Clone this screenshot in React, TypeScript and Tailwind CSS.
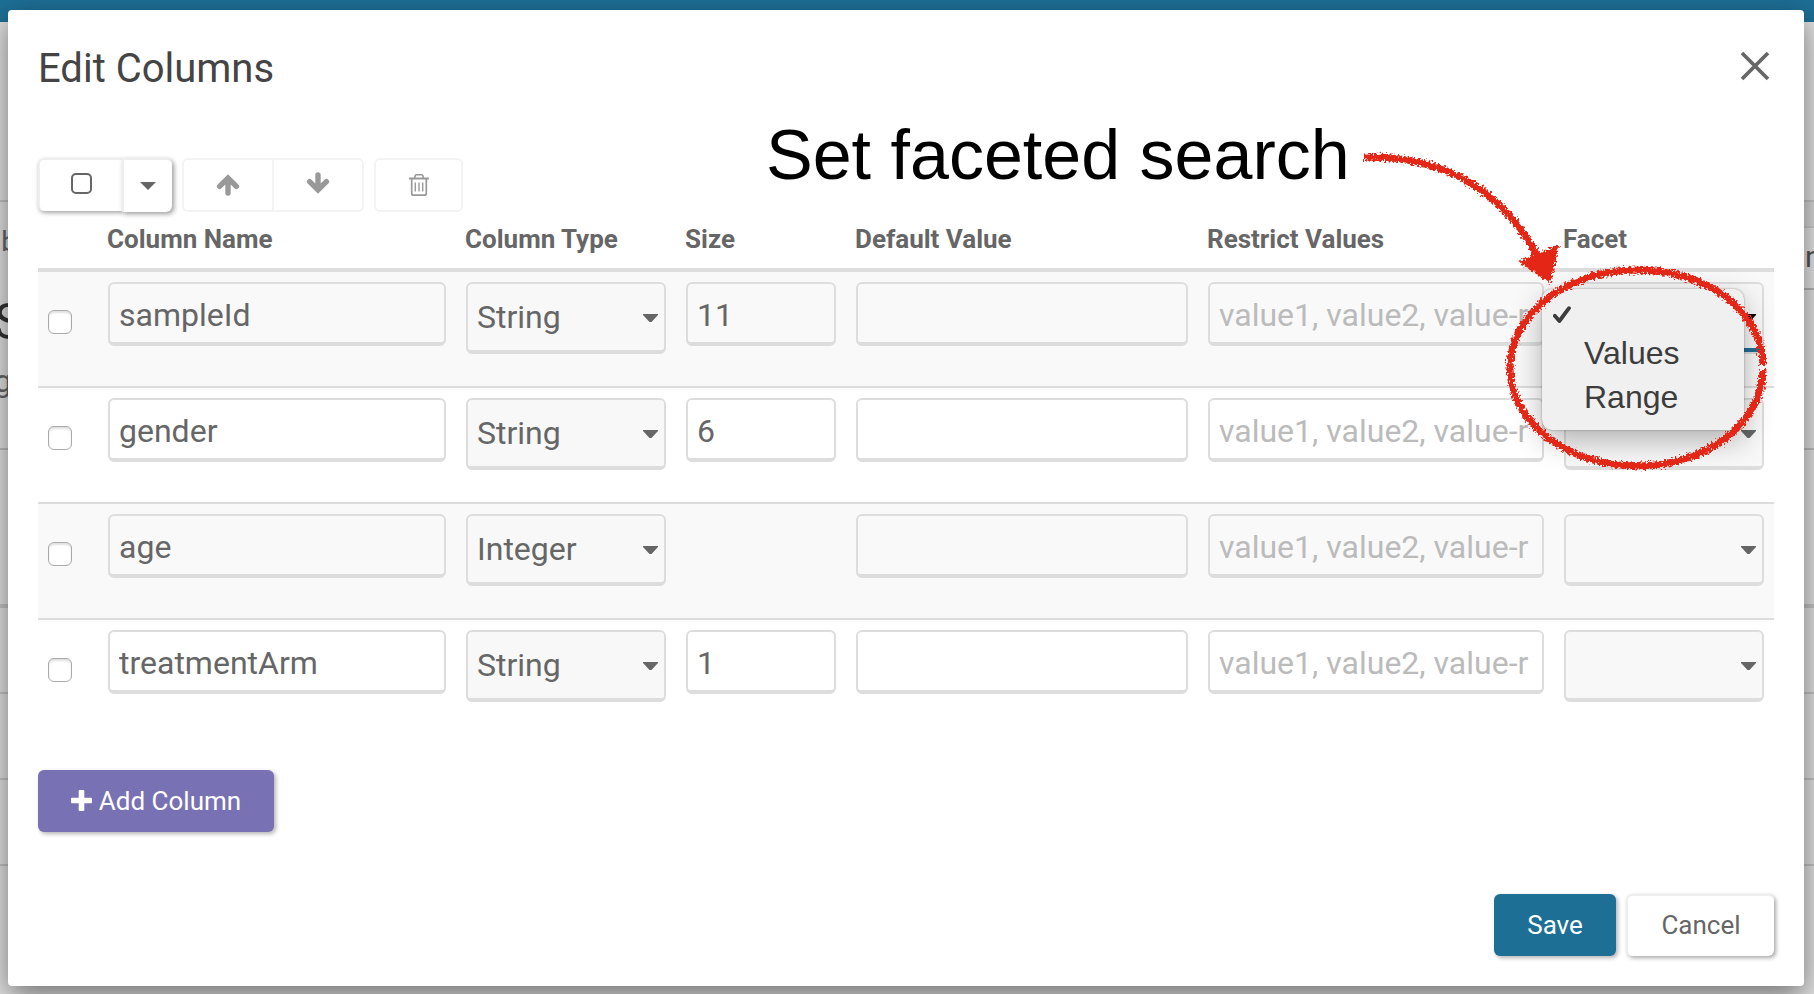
import React from "react";

type Row = { name: string; type: string; size?: string; open?: boolean };

const rows: Row[] = [
  { name: "sampleId", type: "String", size: "11", open: true },
  { name: "gender", type: "String", size: "6" },
  { name: "age", type: "Integer" },
  { name: "treatmentArm", type: "String", size: "1" },
];

const headings = ["Column Name", "Column Type", "Size", "Default Value", "Restrict Values", "Facet"];

const inputClass =
  "block h-16 w-full rounded-md border-2 border-b-4 border-[#dddddd] bg-transparent pt-1 pr-[10px] pl-[9px] text-[32px] text-[#666666] outline-none placeholder:text-[#bbbbbb]";
const selectClass =
  "block h-[72px] w-full appearance-none rounded-md border-2 border-b-4 border-[#dddddd] bg-[#f8f8f8] pr-10 pl-[9px] text-[32px] text-[#666666] outline-none";
const openSelectClass =
  "block h-[72px] w-full appearance-none rounded-md border-2 border-[#dddddd] bg-[#f8f8f8] pr-10 pl-[9px] text-[32px] text-[#666666] shadow-[inset_0_-4px_0_#1e6f96] outline-none";

function Caret({ dark = false }: { dark?: boolean }) {
  return (
    <svg
      className={
        dark
          ? "pointer-events-none absolute top-8 right-2 h-2 w-[15px] text-black"
          : "pointer-events-none absolute top-8 right-2 h-2 w-[15px] text-[#666666]"
      }
      viewBox="0 0 15 8"
      aria-hidden="true"
    >
      <path d="M0 0h15v1L8.5 8h-2L0 1z" fill="currentColor" />
    </svg>
  );
}

function Arrow({ down = false }: { down?: boolean }) {
  return (
    <svg className={down ? "h-6 w-6 rotate-180" : "h-6 w-6"} viewBox="0 0 24 24" aria-hidden="true">
      <path
        d="M3.600 13.400 12 5l8.400 8.400M12 6v14"
        fill="none"
        stroke="#999999"
        strokeWidth="5.400"
        strokeLinecap="round"
      />
    </svg>
  );
}

function TrashIcon() {
  return (
    <svg className="h-6 w-6" viewBox="0 0 24 24" fill="none" stroke="#999999" aria-hidden="true">
      <path d="M2 5.500h20" strokeWidth="2" />
      <path d="M7.500 5 8.300 2.600Q8.600 1.700 9.600 1.700h4.800q1 0 1.300.9L16.500 5" strokeWidth="1.600" />
      <path d="M4.700 6v14.200q0 2 2 2h10.600q2 0 2-2V6" strokeWidth="1.700" />
      <path d="M8.300 9.500v9M12 9.500v9M15.700 9.500v9" strokeWidth="1.400" />
    </svg>
  );
}

function FacetMenu() {
  return (
    <ul
      role="listbox"
      aria-label="Facet"
      className="absolute top-[7px] -left-[22px] z-10 h-[141px] w-[202px] rounded-[10px] bg-[#f0f0f0] pt-[10px] font-['Liberation_Sans',Arial,sans-serif] text-[32px] leading-[44px] text-[#3c3c3c] shadow-[0_0_2px_rgba(0,0,0,0.4),0_10px_30px_rgba(0,0,0,0.3)]"
    >
      <li role="option" aria-selected="true" aria-label="None" className="flex h-8 items-center pl-[11px]">
        <svg className="h-[18px] w-[18px]" viewBox="0 0 18 18" aria-hidden="true">
          <path
            d="M1.800 9.800 6.400 15 16 2.200"
            fill="none"
            stroke="#3c3c3c"
            strokeWidth="3.800"
            strokeLinecap="round"
            strokeLinejoin="round"
          />
        </svg>
      </li>
      <li role="option" aria-selected="false" className="pl-[42px]">Values</li>
      <li role="option" aria-selected="false" className="pl-[42px]">Range</li>
    </ul>
  );
}

function Annotation() {
  return (
    <div className="pointer-events-none absolute top-[109px] right-[37px] z-20 h-[360px] w-[1001px]">
      <p className="font-['Liberation_Sans',Arial,sans-serif] text-[70px] leading-[72px] whitespace-nowrap text-black">
        Set faceted search
      </p>
      <svg className="absolute top-0 right-0" width="410" height="360" viewBox="1357 119 410 360" aria-hidden="true">
        <defs>
          <filter id="crayon" x="-10%" y="-10%" width="120%" height="120%">
            <feTurbulence type="fractalNoise" baseFrequency="0.45" numOctaves="2" seed="4" result="n" />
            <feDisplacementMap in="SourceGraphic" in2="n" scale="8" xChannelSelector="R" yChannelSelector="G" />
          </filter>
        </defs>
        <g filter="url(#crayon)" fill="none" stroke="#e32817" strokeWidth="7">
          <path d="M1364 157C1440 156 1500 186 1537 256" />
          <path d="M1520 262 1558 246 1550 282z" fill="#e32817" strokeWidth="2" strokeLinejoin="round" />
          <path d="M1763 365C1762 310 1706 270 1637 270C1567 270 1510 314 1510 368C1510 422 1567 466 1637 466C1706 466 1762 424 1763 370" />
        </g>
      </svg>
    </div>
  );
}

function Backdrop() {
  return (
    <div className="absolute inset-0 flex flex-col overflow-hidden" aria-hidden="true">
      <div className="h-[22px] shrink-0 bg-[#1e6f96]" />
      <div className="h-[180px] shrink-0 border-b-2 border-[#c4c4c4]" />
      <div className="flex h-[248px] shrink-0 justify-between border-b-2 border-[#bdbdbd]">
        <div className="text-[#666666]">
          <p className="-ml-[14px] pt-[22px] text-[28px] leading-[36px]">ab</p>
          <p className="-ml-[6px] pt-[30px] text-[50px] leading-[64px] text-[#333333]">S</p>
          <p className="-ml-[6px] pt-[7px] text-[32px] leading-[40px]">g</p>
        </div>
        <div className="flex w-[10px] flex-col text-[#555555]">
          <div className="h-[26px] border-b-2 border-[#cccccc] bg-[#d8d8d8]" />
          <p className="h-[62px] border-b-2 border-[#b4b4b4] bg-[#e6e6e6] pl-[1px] text-[30px] leading-[58px]">n</p>
        </div>
      </div>
      <div className="h-[158px] shrink-0 border-b-4 border-[#c4c4c4]" />
      <div className="h-[86px] shrink-0 border-b-2 border-[#c4c4c4]" />
      <div className="h-[86px] shrink-0 border-b-2 border-[#c4c4c4]" />
      <div className="h-[86px] shrink-0 border-b-2 border-[#c4c4c4]" />
    </div>
  );
}

export default function App() {
  return (
    <div className="relative min-h-screen overflow-hidden bg-[#e2e2e2] font-[Roboto,sans-serif] text-[#666666]">
      <Backdrop />
      <div className="relative pt-[10px] pr-[10px] pb-2 pl-2">
        <div
          role="dialog"
          aria-labelledby="dialog-title"
          className="relative flex min-h-[976px] flex-col rounded-[4px] bg-white px-[30px] pb-[30px] shadow-[0_10px_30px_rgba(0,0,0,0.5)]"
        >
          <header className="flex h-28 items-center justify-between">
            <h1 id="dialog-title" className="pt-1.5 text-[40px] text-[#444444]">Edit Columns</h1>
            <button type="button" aria-label="Close" className="pr-[3px]">
              <svg className="h-8 w-8" viewBox="0 0 32 32" aria-hidden="true">
                <path d="M3 3 29 29M29 3 3 29" stroke="#666666" strokeWidth="3.800" />
              </svg>
            </button>
          </header>

          <div className="mt-9 flex h-[54px] items-stretch gap-[10px]">
            <div className="flex">
              <button
                type="button"
                aria-label="Select all"
                className="mb-px flex w-[84px] items-center justify-center rounded-l-md border-2 border-r-0 border-b-0 border-[#eeeeee] bg-white pb-1 shadow-[1px_2px_4px_rgba(0,0,0,0.35)]"
              >
                <span className="h-[21px] w-[21px] rounded-[5px] border-2 border-[#666666]" />
              </button>
              <button
                type="button"
                aria-label="Selection options"
                className="relative flex w-[50px] items-center justify-center rounded-r-md border-2 border-r-0 border-b-0 border-[#eeeeee] bg-white shadow-[2px_2px_5px_rgba(0,0,0,0.4)]"
              >
                <svg className="h-2 w-4" viewBox="0 0 16 8" aria-hidden="true">
                  <path d="M0 0h16L8 8z" fill="#666666" />
                </svg>
              </button>
            </div>
            <div className="flex">
              <button
                type="button"
                disabled
                aria-label="Move up"
                className="flex w-[90px] items-center justify-center rounded-l-md border-2 border-r-0 border-[#f3f3f3]"
              >
                <Arrow />
              </button>
              <button
                type="button"
                disabled
                aria-label="Move down"
                className="flex w-[92px] items-center justify-center rounded-r-md border-2 border-[#f3f3f3] pb-1"
              >
                <Arrow down />
              </button>
            </div>
            <button
              type="button"
              disabled
              aria-label="Delete"
              className="flex w-[89px] items-center justify-center rounded-md border-2 border-[#f3f3f3]"
            >
              <TrashIcon />
            </button>
          </div>

          <table className="w-full table-fixed border-separate border-spacing-0">
            <colgroup>
              <col className="w-[60px]" />
              <col className="w-[358px]" />
              <col className="w-[220px]" />
              <col className="w-[170px]" />
              <col className="w-[352px]" />
              <col className="w-[356px]" />
              <col className="w-[220px]" />
            </colgroup>
            <thead>
              <tr className="text-left text-[26px]">
                <th aria-label="Select" className="h-[60px] border-b-4 border-[#dddddd]" />
                {headings.map((h) => (
                  <th key={h} className="border-b-4 border-[#dddddd] px-[9px] pt-0 pb-[2px]">{h}</th>
                ))}
              </tr>
            </thead>
            <tbody className="[&>tr:not(:last-child)>td]:border-b-2 [&>tr>td]:border-[#dddddd] [&>tr>td]:px-[10px] [&>tr>td]:pt-[10px]">
              {rows.map((r) => (
                <tr key={r.name} className="h-[116px] align-top odd:bg-[#f9f9f9] last:h-[114px]">
                  <td>
                    <input
                      type="checkbox"
                      aria-label={"Select " + r.name}
                      className="mt-7 block h-6 w-6 appearance-none rounded-md border border-[#aaaaaa] bg-white shadow-[inset_0_2px_2px_rgba(0,0,0,0.12)]"
                    />
                  </td>
                  <td>
                    <input aria-label="Column name" className={inputClass} defaultValue={r.name} />
                  </td>
                  <td>
                    <div className="relative">
                      <select aria-label="Column type" className={selectClass} defaultValue={r.type}>
                        <option>{r.type}</option>
                      </select>
                      <Caret />
                    </div>
                  </td>
                  <td>{r.size && <input aria-label="Size" className={inputClass} defaultValue={r.size} />}</td>
                  <td>
                    <input aria-label="Default value" className={inputClass} />
                  </td>
                  <td>
                    <input aria-label="Restrict values" className={inputClass} placeholder="value1, value2, value-r" />
                  </td>
                  <td>
                    <div className="relative">
                      <select aria-label="Facet" className={r.open ? openSelectClass : selectClass}>
                        <option></option>
                      </select>
                      <Caret dark={r.open} />
                      {r.open && <FacetMenu />}
                    </div>
                  </td>
                </tr>
              ))}
            </tbody>
          </table>

          <button
            type="button"
            className="mt-9 flex h-[62px] w-[236px] items-center justify-center gap-[7px] rounded-md bg-[#7871b3] text-[26px] text-white shadow-[2px_2px_4px_rgba(0,0,0,0.3)]"
          >
            <svg className="mb-[2px] h-[21px] w-[21px]" viewBox="0 0 21 21" aria-hidden="true">
              <path
                d="M8.700 0h3.600q1 0 1 1v6.700H20q1 0 1 1v3.600q0 1-1 1h-6.700V20q0 1-1 1H8.700q-1 0-1-1v-6.700H1q-1 0-1-1V8.700q0-1 1-1h6.700V1q0-1 1-1z"
                fill="#ffffff"
              />
            </svg>
            Add Column
          </button>

          <footer className="mt-auto flex justify-end gap-[10px]">
            <button
              type="button"
              className="h-[62px] w-[122px] rounded-md bg-[#1e6f96] text-[26px] text-white shadow-[2px_2px_4px_rgba(0,0,0,0.3)]"
            >
              Save
            </button>
            <button
              type="button"
              className="h-[62px] w-[148px] rounded-md border-t-2 border-l-2 border-[#eeeeee] bg-white pb-[2px] text-[26px] shadow-[2px_2px_4px_rgba(0,0,0,0.35)]"
            >
              Cancel
            </button>
          </footer>
          <Annotation />
        </div>
      </div>
    </div>
  );
}
